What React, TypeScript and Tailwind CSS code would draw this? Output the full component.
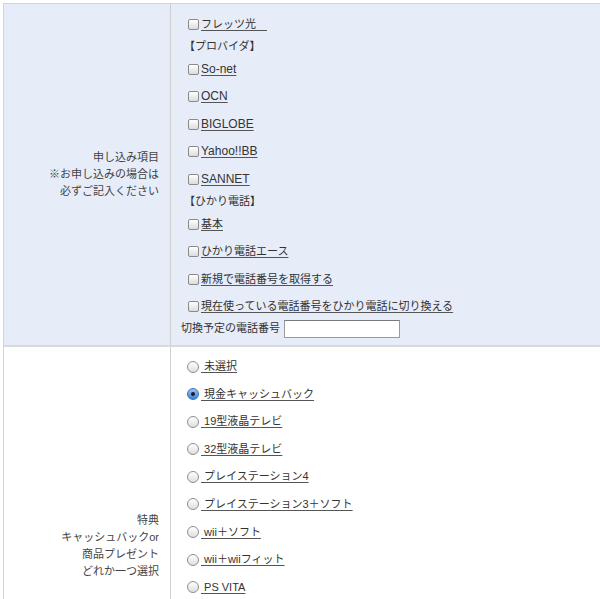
const font = { fontFamily: '"Liberation Sans", "Noto Sans CJK JP", sans-serif' }

const isJa = (s: string) => /[^\x00-\x7f]/.test(s)

function Check({ label }: { label: string }) {
  return (
    <div className="flex items-center h-[17px] ml-[2px]">
      <span className="inline-block w-[11px] h-[11px] rounded-[2px] border border-[#8a8a8a] bg-gradient-to-b from-white to-[#dcdcdc] mr-[2px]" />
      <span className={"underline underline-offset-2 decoration-[#555] " + (isJa(label) ? "text-[11px]" : "text-[12px]")}>
        {label}
      </span>
    </div>
  )
}

function Radio({ label, checked }: { label: string; checked?: boolean }) {
  return (
    <div className="flex items-center h-[17px] ml-[1px]">
      {checked ? (
        <span className="inline-flex items-center justify-center w-[12px] h-[12px] rounded-full border border-[#3a6fb8] bg-gradient-to-b from-[#9cc3f0] to-[#3b82d6]">
          <span className="w-[4px] h-[4px] rounded-full bg-[#1b1b2b]" />
        </span>
      ) : (
        <span className="inline-block w-[12px] h-[12px] rounded-full border border-[#8f8f8f] bg-gradient-to-b from-white to-[#dedede]" />
      )}
      <span className="underline underline-offset-2 decoration-[#555] ml-[2px] text-[11px]">{"\u00a0" + label}</span>
    </div>
  )
}

const prizes = [
  "未選択",
  "現金キャッシュバック",
  "19型液晶テレビ",
  "32型液晶テレビ",
  "プレイステーション4",
  "プレイステーション3＋ソフト",
  "wii＋ソフト",
  "wii＋wiiフィット",
  "PS VITA",
  "ニンテンドー3DS",
  "iPad mini",
  "ルンバ",
  "ダイソン掃除機",
  "商品券",
]

export default function App() {
  return (
    <div className="bg-white min-h-screen pt-[3px] pl-[3px] text-[11px] leading-[17px] text-[#333]" style={font}>
      <div className="border-t border-l border-[#d4d4d4]">
        <div className="flex bg-[#e6edf9] border-b-2 border-[#d9d9d9]">
          <div className="w-[167px] shrink-0 border-r border-[#cfcfcf] flex items-center justify-end pr-[11px] text-right text-[#444]">
            <div>
              申し込み項目
              <br />
              ※お申し込みの場合は
              <br />
              必ずご記入ください
            </div>
          </div>
          <div className="flex-1 pl-[15px] pt-[11.5px] pb-[6.5px] flex flex-col">
            <Check label="フレッツ光　" />
            <div className="mt-[5px] -ml-[2px]">【プロバイダ】</div>
            <div className="mt-[6px]"><Check label="So-net" /></div>
            <div className="mt-[10.5px]"><Check label="OCN" /></div>
            <div className="mt-[10.5px]"><Check label="BIGLOBE" /></div>
            <div className="mt-[10.5px]"><Check label="Yahoo!!BB" /></div>
            <div className="mt-[10.5px]"><Check label="SANNET" /></div>
            <div className="mt-[5px] -ml-[2px]">【ひかり電話】</div>
            <div className="mt-[6px]"><Check label="基本" /></div>
            <div className="mt-[10.5px]"><Check label="ひかり電話エース" /></div>
            <div className="mt-[10.5px]"><Check label="新規で電話番号を取得する" /></div>
            <div className="mt-[10.5px]"><Check label="現在使っている電話番号をひかり電話に切り換える" /></div>
            <div className="mt-[4px] -ml-[5px] flex items-center h-[19px]">
              <span>切換予定の電話番号</span>
              <input
                type="text"
                className="ml-[4px] w-[116px] h-[18px] bg-white border border-[#9a9a9a] border-t-[#7a7a7a] outline-none"
              />
            </div>
          </div>
        </div>
        <div className="flex bg-white">
          <div className="w-[167px] shrink-0 border-r border-[#cfcfcf] flex items-center justify-end pr-[11px] text-right text-[#444]">
            <div>
              特典
              <br />
              キャッシュバックor
              <br />
              商品プレゼント
              <br />
              どれか一つ選択
            </div>
          </div>
          <div className="flex-1 pl-[15px] pt-[11.5px] pb-[11.5px] flex flex-col gap-[10.6px]">
            {prizes.map((p, i) => (
              <Radio key={p} label={p} checked={i === 1} />
            ))}
          </div>
        </div>
      </div>
    </div>
  )
}
